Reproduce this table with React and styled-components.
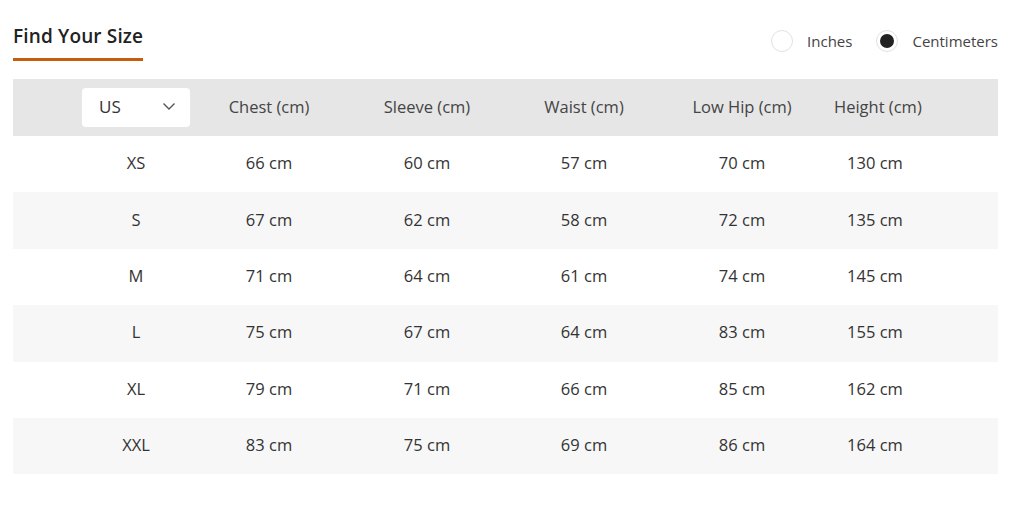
import React from "react";
import styled, { createGlobalStyle } from "styled-components";

const Global = createGlobalStyle`
  body { margin: 0; background: #fff; font-family: "Open Sans", "Noto Sans", sans-serif; color: #333; }
`;

const Page = styled.div`
  padding: 0 26px 0 13px;
  width: 1024px;
  box-sizing: border-box;
`;

const Top = styled.div`
  display: flex;
  justify-content: space-between;
  align-items: flex-start;
  height: 79px;
`;

const Title = styled.h2`
  margin: 24px 0 0;
  font-size: 19px;
  font-weight: 600;
  color: #222;
  padding-bottom: 9px;
  border-bottom: 3px solid #c75d0a;
  line-height: 25px;
  letter-spacing: 0.15px;
`;

const Units = styled.div`
  display: flex;
  align-items: center;
  margin-top: 30px;
`;

const Option = styled.label`
  display: flex;
  align-items: center;
  gap: 14px;
  font-size: 15px;
  color: #444;
  margin-left: ${(p) => (p.$first ? "0" : "24px")};
`;

const Radio = styled.span`
  width: 22px;
  height: 22px;
  border-radius: 50%;
  border: 1px solid #e2e2e2;
  box-sizing: border-box;
  display: flex;
  align-items: center;
  justify-content: center;
  background: #fff;
  &::after {
    content: "";
    width: 14px;
    height: 14px;
    border-radius: 50%;
    background: ${(p) => (p.$checked ? "#222" : "transparent")};
  }
`;

const Table = styled.div`
  display: flex;
  flex-direction: column;
`;

const Row = styled.div`
  display: grid;
  grid-template-columns: 132px 134px 182px 132px 184px 82px;
  padding-left: 57px;
  height: ${(p) => (p.$head ? "57px" : "56.4px")};
  align-items: center;
  background: ${(p) => (p.$head ? "#e6e6e6" : p.$alt ? "#f7f7f7" : "#fff")};
`;

const Cell = styled.div`
  text-align: center;
  font-size: 16.5px;
  line-height: 20px;
  padding-bottom: 2px;
  color: ${(p) => (p.$head ? "#444" : "#333")};
  white-space: nowrap;
`;

const Select = styled.div`
  justify-self: center;
  width: 108px;
  height: 39px;
  background: #fff;
  border-radius: 4px;
  display: flex;
  align-items: center;
  justify-content: space-between;
  padding: 0 14px 2px 17px;
  box-sizing: border-box;
  font-size: 17px;
  color: #333;
`;

const rows = [
  ["XS", "66 cm", "60 cm", "57 cm", "70 cm", "130 cm"],
  ["S", "67 cm", "62 cm", "58 cm", "72 cm", "135 cm"],
  ["M", "71 cm", "64 cm", "61 cm", "74 cm", "145 cm"],
  ["L", "75 cm", "67 cm", "64 cm", "83 cm", "155 cm"],
  ["XL", "79 cm", "71 cm", "66 cm", "85 cm", "162 cm"],
  ["XXL", "83 cm", "75 cm", "69 cm", "86 cm", "164 cm"],
];

export default function App() {
  return (
    <Page>
      <Global />
      <Top>
        <Title>Find Your Size</Title>
        <Units>
          <Option $first>
            <Radio />
            Inches
          </Option>
          <Option>
            <Radio $checked />
            Centimeters
          </Option>
        </Units>
      </Top>
      <Table>
        <Row $head>
          <Select>
            US
            <svg width="14" height="9" viewBox="0 0 14 9" fill="none">
              <path d="M1.5 1.5 L7 7 L12.5 1.5" stroke="#555" strokeWidth="1.4" />
            </svg>
          </Select>
          <Cell $head>Chest (cm)</Cell>
          <Cell $head>Sleeve (cm)</Cell>
          <Cell $head>Waist (cm)</Cell>
          <Cell $head>Low Hip (cm)</Cell>
          <Cell $head>Height (cm)</Cell>
        </Row>
        {rows.map((r, i) => (
          <Row key={r[0]} $alt={i % 2 === 1}>
            {r.map((c, j) => (
              <Cell key={j}>{c}</Cell>
            ))}
          </Row>
        ))}
      </Table>
    </Page>
  );
}
